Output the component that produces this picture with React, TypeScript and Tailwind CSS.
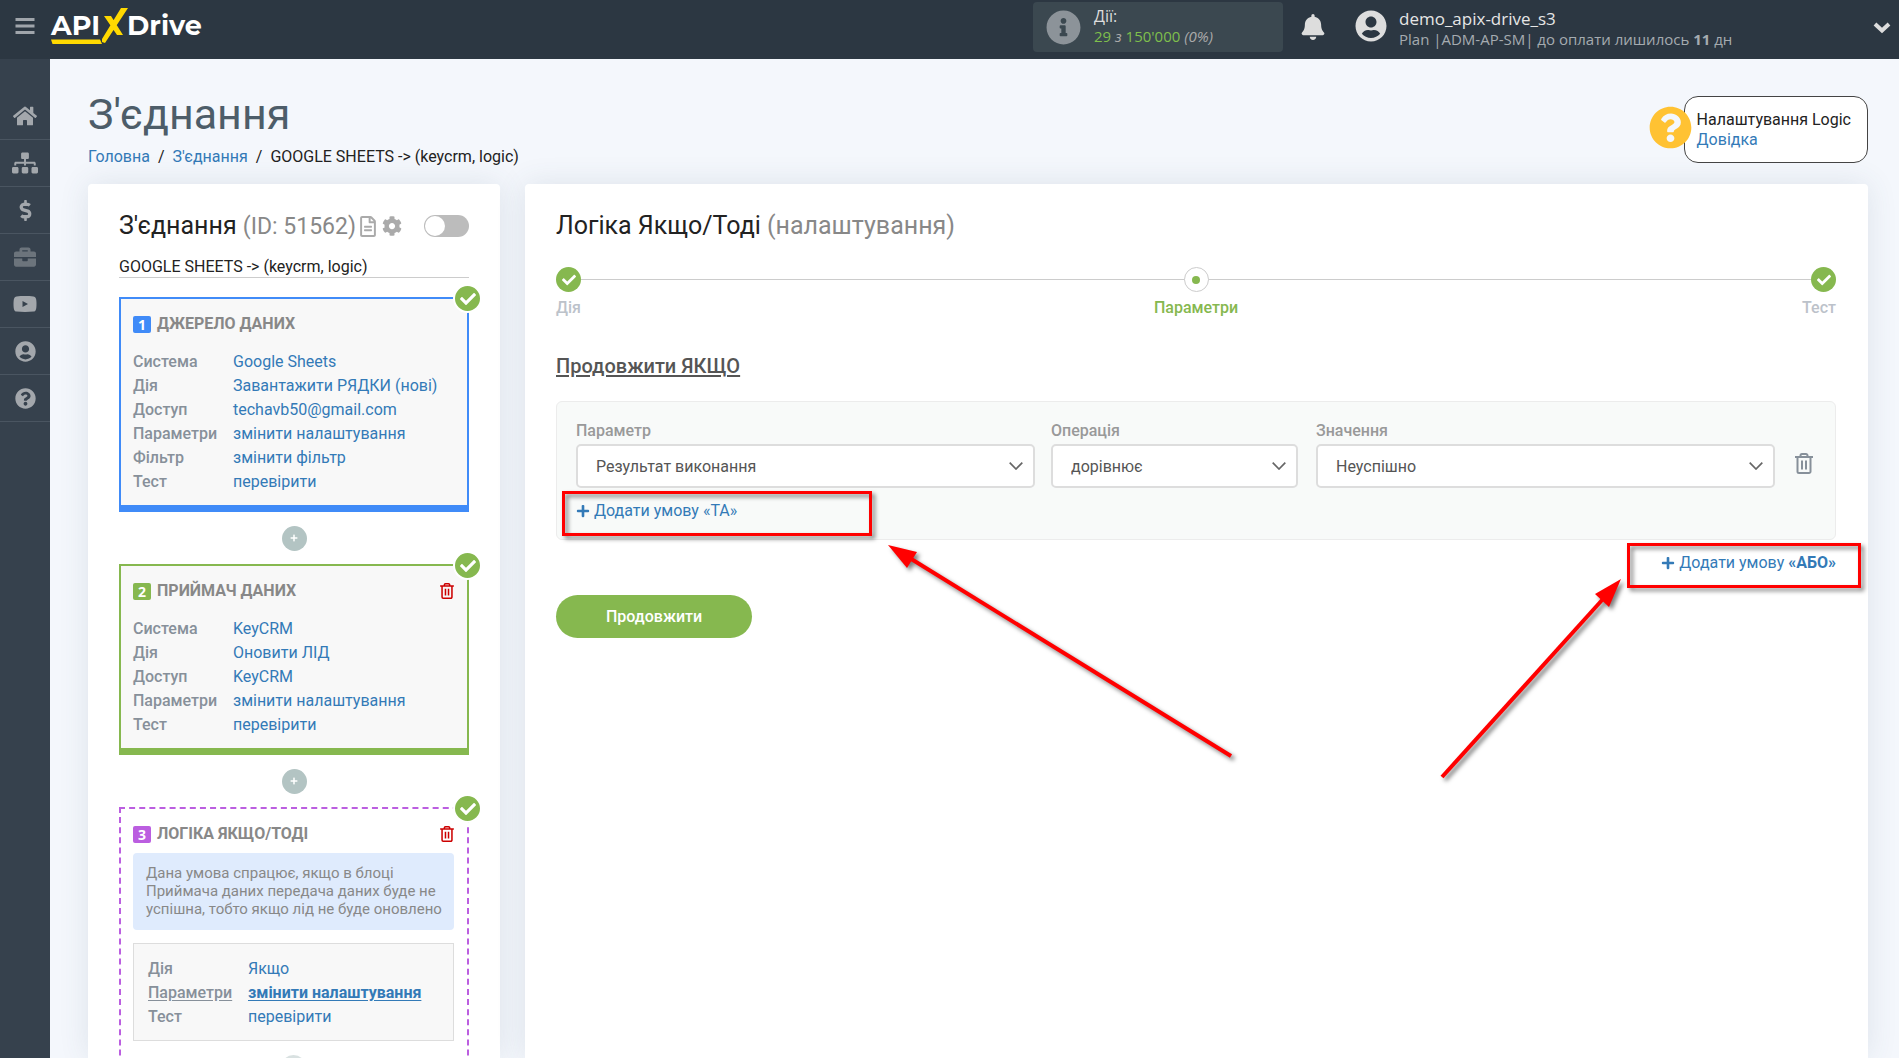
import React, { useState } from "react";
import {
  FaBell,
  FaBriefcase,
  FaCheck,
  FaCog,
  FaDollarSign,
  FaHome,
  FaInfoCircle,
  FaPlus,
  FaQuestionCircle,
  FaRegFileAlt,
  FaSitemap,
  FaUserCircle,
} from "react-icons/fa";

const TrashIcon: React.FC<{ className: string }> = ({ className }) => (
  <svg className={className} viewBox="0 0 18 21" fill="none" stroke="currentColor" strokeWidth={2}>
    <path d="M0 4h18M2.5 4v14.5a1.5 1.5 0 0 0 1.5 1.5h10a1.5 1.5 0 0 0 1.5-1.5V4M5.5 3.5V2.5A1.5 1.5 0 0 1 7 1h4a1.5 1.5 0 0 1 1.5 1.5v1M7 7.5v9M11 7.5v9" />
  </svg>
);

const VideoIcon: React.FC<{ className?: string }> = ({ className }) => (
  <svg className={className} viewBox="0 0 23 16" fill="currentColor">
    <path
      fillRule="evenodd"
      d="M3 0.4C8 0 15 0 20 0.4C22 0.6 23 2 23 8C23 14 22 15.4 20 15.6C15 16 8 16 3 15.6C1 15.4 0 14 0 8C0 2 1 0.6 3 0.4ZM9 5V11L14.5 8Z"
    />
  </svg>
);

const Logo = () => (
  <a
    href="#"
    aria-label="APIXDrive"
    className="relative flex h-9 items-center font-['Montserrat','Open_Sans',sans-serif] text-[27px] leading-9 font-bold text-white"
  >
    <span>API</span>
    <svg className="h-9 w-[27px] overflow-visible" viewBox="0 0 27 36" fill="#ffd900">
      <path d="M21 0H28L5 35L2 34V31ZM4 8H11L23 27H17Z" />
    </svg>
    <span>Drive</span>
    <svg className="absolute bottom-0 left-0 h-[5px] w-[51px]" viewBox="0 0 51 5" fill="#ffd900">
      <path d="M0 0.5H49L51 5H1.5Z" />
    </svg>
  </a>
);

const navItems = [
  { label: "Головна", icon: <FaHome className="size-6" /> },
  { label: "З'єднання", icon: <FaSitemap className="size-[26px]" /> },
  { label: "Оплата", icon: <FaDollarSign className="size-[21px]" /> },
  { label: "Проєкти", icon: <FaBriefcase className="size-[22px] opacity-50" /> },
  { label: "Відео", icon: <VideoIcon className="h-4 w-6" /> },
  { label: "Профіль", icon: <FaUserCircle className="size-[21px]" /> },
  { label: "Допомога", icon: <FaQuestionCircle className="size-[21px]" /> },
];

const sourceRows = [
  ["Система", "Google Sheets"],
  ["Дія", "Завантажити РЯДКИ (нові)"],
  ["Доступ", "techavb50@gmail.com"],
  ["Параметри", "змінити налаштування"],
  ["Фільтр", "змінити фільтр"],
  ["Тест", "перевірити"],
];

const receiverRows = [
  ["Система", "KeyCRM"],
  ["Дія", "Оновити ЛІД"],
  ["Доступ", "KeyCRM"],
  ["Параметри", "змінити налаштування"],
  ["Тест", "перевірити"],
];

const logicRows = [
  ["Дія", "Якщо"],
  ["Параметри", "змінити налаштування"],
  ["Тест", "перевірити"],
];

interface RowsProps {
  rows: string[][];
  active?: string;
}

const Rows: React.FC<RowsProps> = ({ rows, active }) => (
  <dl>
    {rows.map(([label, value]) => (
      <div key={label} className="flex leading-6">
        <dt
          className={
            label === active
              ? "w-[100px] font-medium text-[#87909a] underline underline-offset-2"
              : "w-[100px] font-medium text-[#87909a]"
          }
        >
          {label}
        </dt>
        <dd>
          <a
            href="#"
            className={
              label === active
                ? "font-bold text-[#337ab7] underline underline-offset-2"
                : "text-[#337ab7]"
            }
          >
            {value}
          </a>
        </dd>
      </div>
    ))}
  </dl>
);

interface BlockProps {
  number: number;
  title: string;
  frame: string;
  badge: string;
  removable?: boolean;
  children: React.ReactNode;
}

const Block: React.FC<BlockProps> = ({ number, title, frame, badge, removable, children }) => (
  <section className={`relative pt-[11px] pr-[13px] pl-3 ${frame}`}>
    <span className="absolute -top-[15px] -right-[15px] flex size-[29px] items-center justify-center rounded-full border-2 border-white bg-[#86b84f] text-white">
      <FaCheck className="size-4" />
    </span>
    <div className="flex h-7 items-center">
      <span className={`mr-1.5 h-[17px] w-[18px] rounded-xs text-center font-['Open_Sans',sans-serif] text-sm leading-[17px] font-bold text-white ${badge}`}>
        {number}
      </span>
      <h3 className="font-bold text-[#888]">{title}</h3>
      {removable && (
        <button aria-label="Видалити" className="ml-auto text-[#c00]">
          <TrashIcon className="h-4 w-3.5" />
        </button>
      )}
    </div>
    {children}
  </section>
);

const AddButton = () => (
  <div className="flex h-13 items-center justify-center">
    <button aria-label="Додати блок" className="flex size-[25px] items-center justify-center rounded-full bg-[#b3c4c3] text-white">
      <FaPlus className="size-2" />
    </button>
  </div>
);

interface SelectFieldProps {
  id: string;
  label: string;
  value: string;
  className: string;
}

const SelectField: React.FC<SelectFieldProps> = ({ id, label, value, className }) => (
  <div className={className}>
    <label htmlFor={id} className="block leading-6 font-medium text-[#999]">
      {label}
    </label>
    <div className="relative mt-px">
      <select id={id} className="h-11 w-full appearance-none rounded-[5px] border-2 border-[#ddd] bg-white px-[18px] pt-px text-[#555]">
        <option>{value}</option>
      </select>
      <svg className="pointer-events-none absolute top-[18px] right-3 h-2 w-3.5" viewBox="0 0 14 8" fill="none" stroke="#666" strokeWidth={1.7}>
        <path d="M0.7 0.7L7 7L13.3 0.7" />
      </svg>
    </div>
  </div>
);

export default function App() {
  const [enabled, setEnabled] = useState(false);

  return (
    <div className="flex h-screen flex-col overflow-hidden bg-[#f4f7fc] font-[Roboto,sans-serif] text-base text-[#222]">
      <header className="flex h-[59px] shrink-0 items-start bg-[#2c3742] pr-2 font-['Open_Sans',sans-serif]">
        <button aria-label="Меню" className="mt-[18px] mr-4 ml-[15px] text-[#a0a5ab]">
          <svg className="h-4 w-5" viewBox="0 0 20 16" fill="currentColor">
            <path d="M0.5 0H19.5V3H0.5ZM0.5 6.5H19.5V9.5H0.5ZM0.5 13H19.5V16H0.5Z" />
          </svg>
        </button>
        <div className="mt-2">
          <Logo />
        </div>
        <div className="mt-0.5 ml-auto flex h-[50px] w-[250px] items-start gap-[13px] rounded bg-[#3b4850] px-[13px]">
          <FaInfoCircle className="mt-2 size-[35px] text-[#8c9399]" />
          <div className="pt-1 text-[15px] leading-5">
            <p className="text-base leading-5 text-[#ddd]">Дії:</p>
            <p className="text-[#7fbf4c]">
              29 <i className="text-[#aaa]">з</i> 150'000 <i className="text-[#aaa]">(0%)</i>
            </p>
          </div>
        </div>
        <button aria-label="Сповіщення" className="mt-3.5 ml-[17px] text-[#ddd]">
          <FaBell className="size-[26px]" />
        </button>
        <FaUserCircle className="mt-2.5 ml-[29px] size-8 text-[#ddd]" />
        <div className="mt-[9px] ml-3 w-[474px]">
          <p className="text-[17px] leading-5 text-[#e6e6e6]">demo_apix-drive_s3</p>
          <p className="text-[15px] leading-5 text-[#a5abb0]">
            Plan |ADM-AP-SM| до оплати лишилось <b>11</b> дн
          </p>
        </div>
        <button aria-label="Відкрити меню" className="mt-[22px] text-[#ddd]">
          <svg className="h-3 w-[18px]" viewBox="0 0 18 12" fill="none" stroke="currentColor" strokeWidth={4}>
            <path d="M2 2L9 8.5L16 2" />
          </svg>
        </button>
      </header>

      <div className="flex min-h-0 flex-1">
        <nav className="w-[50px] shrink-0 bg-[#36414d] pt-[34px]">
          {navItems.map((item) => (
            <a
              key={item.label}
              href="#"
              aria-label={item.label}
              className="flex h-[47px] items-center justify-center border-b border-[#4a5561] text-[#a3a7ac]"
            >
              {item.icon}
            </a>
          ))}
        </nav>

        <main className="relative flex min-w-0 flex-1 flex-col pr-[31px] pl-[38px]">
          <div className="flex h-[125px] shrink-0 items-start justify-between">
            <div className="pt-7">
              <h1 className="text-[43px] leading-[54px] text-[#4d5d69]">З'єднання</h1>
              <div className="flex gap-2 pt-1 leading-6">
                <a href="#" className="text-[#337ab7]">
                  Головна
                </a>
                <span>/</span>
                <a href="#" className="text-[#337ab7]">
                  З'єднання
                </a>
                <span>/</span>
                <span>GOOGLE SHEETS -&gt; (keycrm, logic)</span>
              </div>
            </div>
            <div className="relative mt-[37px] h-[67px] rounded-[14px] border border-[#444] bg-white pt-[13px] pr-4 pl-3 leading-5">
              <FaQuestionCircle className="absolute top-[9px] -left-9 size-[43px] text-[#ffc233]" />
              <p>Налаштування Logic</p>
              <a href="#" className="text-[#337ab7]">
                Довідка
              </a>
            </div>
          </div>

          <div className="flex min-h-0 flex-1 gap-[25px]">
            <aside className="w-[412px] shrink-0 rounded-t bg-white px-[31px] pt-6 shadow-[0_0_30px_rgba(60,80,110,0.12)]">
              <div className="flex h-9 items-center">
                <h2 className="text-[25px]">
                  З'єднання <span className="text-[23px] text-[#888]">(ID: 51562)</span>
                </h2>
                <FaRegFileAlt className="ml-1 h-[21px] w-4 text-[#aaa]" />
                <FaCog className="ml-1.5 size-5 text-[#aaa]" />
                <button
                  role="switch"
                  aria-checked={enabled}
                  aria-label="Увімкнути з'єднання"
                  onClick={() => setEnabled(!enabled)}
                  className="ml-auto h-[22px] w-[45px] rounded-full bg-[#bcbcbc] p-px"
                >
                  <span className={enabled ? "ml-auto block size-5 rounded-full bg-white" : "block size-5 rounded-full bg-white"} />
                </button>
              </div>
              <p className="mt-3 mb-[19px] border-b border-[#ccc] leading-[21px]">GOOGLE SHEETS -&gt; (keycrm, logic)</p>

              <Block
                number={1}
                title="ДЖЕРЕЛО ДАНИХ"
                frame="border-2 border-b-[7px] border-[#408bf8] bg-[#f8f8f8]"
                badge="bg-[#408bf8]"
              >
                <div className="pt-3 pb-[11px]">
                  <Rows rows={sourceRows} />
                </div>
              </Block>
              <AddButton />
              <Block
                number={2}
                title="ПРИЙМАЧ ДАНИХ"
                frame="border-2 border-b-[7px] border-[#86b84f] bg-[#f8f8f8]"
                badge="bg-[#86b84f]"
                removable
              >
                <div className="pt-3 pb-[11px]">
                  <Rows rows={receiverRows} />
                </div>
              </Block>
              <AddButton />
              <Block
                number={3}
                title="ЛОГІКА ЯКЩО/ТОДІ"
                frame="border-2 border-dashed border-[#bb5ee0]"
                badge="bg-[#bb5ee0]"
                removable
              >
                <p className="mt-[5px] rounded bg-[#dfebfd] pt-[11px] pr-2 pb-3 pl-[13px] text-[15px] leading-[18px] text-[#888]">
                  Дана умова спрацює, якщо в блоці Приймача даних передача даних буде не успішна, тобто якщо лід не буде оновлено
                </p>
                <div className="mt-[13px] border border-[#ddd] bg-[#f8f8f8] px-3.5 pt-[13px] pb-[11px]">
                  <Rows rows={logicRows} active="Параметри" />
                </div>
                <div className="flex justify-center py-3.5 opacity-50">
                  <button aria-label="Додати умову" className="flex size-[25px] items-center justify-center rounded-full bg-[#b3c4c3] text-white">
                    <FaPlus className="size-2" />
                  </button>
                </div>
              </Block>
            </aside>

            <section className="min-w-0 flex-1 rounded-t bg-white pt-6 pr-8 pl-[31px] shadow-[0_0_30px_rgba(60,80,110,0.12)]">
              <h2 className="text-[25px] leading-9">
                Логіка Якщо/Тоді <span className="text-[#888]">(налаштування)</span>
              </h2>

              <ol className="relative mt-[23px] flex justify-between">
                <li className="absolute top-3 right-0 left-0 h-px bg-[#ccc]" aria-hidden="true" />
                <li className="relative flex flex-1 flex-col items-start gap-1">
                  <span className="flex size-[25px] items-center justify-center rounded-full bg-[#86b84f] text-white">
                    <FaCheck className="size-3.5" />
                  </span>
                  <span className="font-medium text-[#bcc2ca]">Дія</span>
                </li>
                <li className="relative flex flex-col items-center gap-1">
                  <span className="flex size-[25px] items-center justify-center rounded-full border border-[#ccc] bg-white">
                    <span className="size-2 rounded-full bg-[#86b84f]" />
                  </span>
                  <span className="font-medium text-[#86b84f]">Параметри</span>
                </li>
                <li className="relative flex flex-1 flex-col items-end gap-1">
                  <span className="flex size-[25px] items-center justify-center rounded-full bg-[#86b84f] text-white">
                    <FaCheck className="size-3.5" />
                  </span>
                  <span className="font-medium text-[#bcc2ca]">Тест</span>
                </li>
              </ol>

              <h3 className="mt-8 text-xl font-medium text-[#555] underline underline-offset-2">Продовжити ЯКЩО</h3>

              <div className="mt-[21px] h-[139px] rounded-md border border-[#ececec] bg-[#f8faf9] px-[19px] pt-[17px]">
                <div className="flex items-end">
                  <SelectField id="parameter" label="Параметр" value="Результат виконання" className="mr-4 flex-[459]" />
                  <SelectField id="operation" label="Операція" value="дорівнює" className="mr-[18px] flex-[247]" />
                  <SelectField id="value" label="Значення" value="Неуспішно" className="flex-[459]" />
                  <button aria-label="Видалити умову" className="mb-3.5 ml-5 pr-[3px] text-[#87909a]">
                    <TrashIcon className="h-[21px] w-[18px]" />
                  </button>
                </div>
                <a href="#" className="mt-[11px] inline-flex items-center gap-1 text-[#337ab7]">
                  <FaPlus className="size-3.5" />
                  Додати умову «ТА»
                </a>
              </div>

              <div className="mt-[11px] flex justify-end">
                <a href="#" className="flex items-center gap-1 text-[#337ab7]">
                  <FaPlus className="size-3.5" />
                  <span>
                    Додати умову <b>«АБО»</b>
                  </span>
                </a>
              </div>

              <button className="mt-5 h-[43px] rounded-full bg-[#86b84f] px-[50px] font-medium text-white">Продовжити</button>
            </section>
          </div>

          {/* callouts pointing at the two "add condition" links */}
          <svg
            className="pointer-events-none absolute top-[426px] left-[508px] h-[300px] w-[1310px] drop-shadow-[3px_3px_2px_rgba(0,0,0,0.5)]"
            viewBox="0 0 1310 300"
            fill="none"
            stroke="#f00"
          >
            <rect x="5.5" y="7.5" width="307" height="42" strokeWidth={3} />
            <rect x="1070.5" y="59.5" width="231" height="42" strokeWidth={3} />
            <path d="M350 72L673 271" strokeWidth={4} />
            <path d="M1045 114L884 292" strokeWidth={4} />
            <path d="M330 60L359 67L349 83Z" fill="#f00" stroke="none" />
            <path d="M1063 94L1051 122L1037 109Z" fill="#f00" stroke="none" />
          </svg>
        </main>
      </div>
    </div>
  );
}
